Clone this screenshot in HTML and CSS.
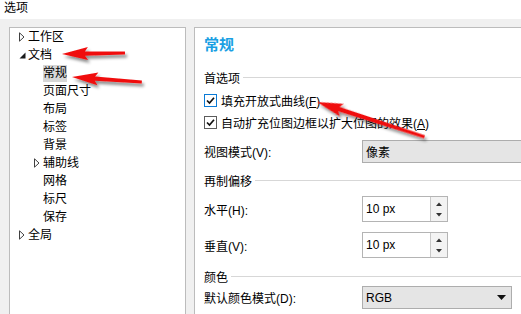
FILE: index.html
```html
<!DOCTYPE html>
<html lang="zh-CN">
<head>
<meta charset="utf-8">
<title>选项</title>
<link rel="stylesheet" href="styles.css">
</head>
<body>
<div class="title">选项</div>
<div class="main">
  <div class="tree">
    <div class="node l0"><span class="tog"><svg width="6" height="10" viewBox="0 0 6 10"><path d="M0.5 0.8 L5 5 L0.5 9.2 Z" fill="#fff" stroke="#404040" stroke-width="1"/></svg></span><span class="lbl">工作区</span></div>
    <div class="node l0"><span class="tog"><svg width="7" height="7" viewBox="0 0 7 7"><path d="M6.5 0.5 L6.5 6.5 L0.5 6.5 Z" fill="#1a1a1a"/></svg></span><span class="lbl">文档</span></div>
    <div class="node l1"><span class="tog"></span><span class="lbl sel">常规</span></div>
    <div class="node l1"><span class="tog"></span><span class="lbl">页面尺寸</span></div>
    <div class="node l1"><span class="tog"></span><span class="lbl">布局</span></div>
    <div class="node l1"><span class="tog"></span><span class="lbl">标签</span></div>
    <div class="node l1"><span class="tog"></span><span class="lbl">背景</span></div>
    <div class="node l1"><span class="tog"><svg width="6" height="10" viewBox="0 0 6 10"><path d="M0.5 0.8 L5 5 L0.5 9.2 Z" fill="#fff" stroke="#404040" stroke-width="1"/></svg></span><span class="lbl">辅助线</span></div>
    <div class="node l1"><span class="tog"></span><span class="lbl">网格</span></div>
    <div class="node l1"><span class="tog"></span><span class="lbl">标尺</span></div>
    <div class="node l1"><span class="tog"></span><span class="lbl">保存</span></div>
    <div class="node l0"><span class="tog"><svg width="6" height="10" viewBox="0 0 6 10"><path d="M0.5 0.8 L5 5 L0.5 9.2 Z" fill="#fff" stroke="#404040" stroke-width="1"/></svg></span><span class="lbl">全局</span></div>
  </div>
  <div class="page">
    <div class="heading">常规</div>
    <div class="group g1">首选项</div>
    <div class="check c1"><span class="box focus"><svg width="11" height="11" viewBox="0 0 11 11"><path d="M2 5.5 L4.5 8 L9 2.8" fill="none" stroke="#111" stroke-width="1.7"/></svg></span><span>填充开放式曲线(<u>F</u>)</span></div>
    <div class="check c2"><span class="box"><svg width="11" height="11" viewBox="0 0 11 11"><path d="M2 5.5 L4.5 8 L9 2.8" fill="none" stroke="#111" stroke-width="1.7"/></svg></span><span>自动扩充位图边框以扩大位图的效果(<u>A</u>)</span></div>
    <div class="field f-view"><span class="flabel">视图模式(V):</span><span class="select wide">像素</span></div>
    <div class="group g2">再制偏移</div>
    <div class="field f-h"><span class="flabel">水平(H):</span><span class="spin"><span class="spin-val">10 px</span><span class="spin-btns"><svg width="6" height="4" viewBox="0 0 6 4"><path d="M0 4 L3 0.5 L6 4 Z" fill="#333"/></svg><svg width="6" height="4" viewBox="0 0 6 4"><path d="M0 0 L3 3.5 L6 0 Z" fill="#333"/></svg></span></span></div>
    <div class="field f-v"><span class="flabel">垂直(V):</span><span class="spin"><span class="spin-val">10 px</span><span class="spin-btns"><svg width="6" height="4" viewBox="0 0 6 4"><path d="M0 4 L3 0.5 L6 4 Z" fill="#333"/></svg><svg width="6" height="4" viewBox="0 0 6 4"><path d="M0 0 L3 3.5 L6 0 Z" fill="#333"/></svg></span></span></div>
    <div class="group g3">颜色</div>
    <div class="field f-color"><span class="flabel">默认颜色模式(D):</span><span class="select combo"><span>RGB</span><svg width="9" height="5" viewBox="0 0 9 5"><path d="M0 0 L9 0 L4.5 5 Z" fill="#111"/></svg></span></div>
  </div>
</div>
<svg class="arrows" width="521" height="314" viewBox="0 0 521 314">
  <defs>
    <filter id="sh" x="-30%" y="-60%" width="160%" height="220%">
      <feDropShadow dx="2" dy="3" stdDeviation="1.8" flood-color="#000" flood-opacity="0.45"/>
    </filter>
  </defs>
  <g filter="url(#sh)" fill="#f01010">
    <polygon transform="translate(62 54) rotate(-0.9)" points="0,0 26,-6.5 23,-2.2 63,-1.4 63,1.4 23,2.2 26,6.5"/>
    <polygon transform="translate(72 77) rotate(4.1)" points="0,0 26,-6.5 23,-2.2 70,-1.4 70,1.4 23,2.2 26,6.5"/>
    <polygon transform="translate(317 102) rotate(17.95)" points="0,0 26,-6.5 23,-2.2 113,-1.5 113,1.5 23,2.2 26,6.5"/>
  </g>
</svg>
</body>
</html>
```
FILE: styles.css
```css
html, body {
  margin: 0;
  width: 521px;
  height: 314px;
  overflow: hidden;
}
body {
  position: relative;
  background: #f0f0f0;
  font-family: "Liberation Sans", "Noto Sans CJK SC", sans-serif;
  font-size: 12px;
  color: #000;
}
.title {
  height: 19px;
  line-height: 17px;
  padding-left: 4px;
  background: #fff;
}
.main {
  display: flex;
  gap: 8px;
  padding: 8px 0 0 9px;
}
.tree {
  flex: none;
  width: 177px;
  height: 300px;
  box-sizing: border-box;
  background: #fff;
  border: 1px solid #bcbcbc;
}
.node {
  height: 18px;
  display: flex;
  align-items: center;
}
.l0 { padding-left: 9px; }
.l1 { padding-left: 24px; }
.tog {
  width: 9px;
  flex: none;
  display: flex;
  align-items: center;
}
.lbl {
  line-height: 17px;
  white-space: nowrap;
}
.sel {
  background: #d6d6d6;
}
.page {
  flex: none;
  width: 340px;
  height: 300px;
  box-sizing: border-box;
  background: #fff;
  border: 1px solid #bcbcbc;
  padding-left: 9px;
  display: flex;
  flex-direction: column;
  overflow: hidden;
}
.heading {
  margin-top: 7px;
  height: 20px;
  line-height: 20px;
  font-size: 15px;
  font-weight: bold;
  color: #1a9fe3;
}
.group {
  height: 16px;
  display: flex;
  align-items: center;
  white-space: nowrap;
}
.group::after {
  content: "";
  flex: 1;
  border-top: 1px solid #d7d7d7;
  margin-left: 3px;
}
.g1 { margin-top: 14px; }
.g2 { margin-top: 9px; }
.g3 { margin-top: 10px; }
.check {
  height: 18px;
  display: flex;
  align-items: center;
  white-space: nowrap;
}
.c1 { margin-top: 6px; }
.c2 { margin-top: 4px; }
.box {
  width: 13px;
  height: 13px;
  box-sizing: border-box;
  border: 1px solid #5c5c5c;
  background: #fff;
  margin-right: 4px;
  display: flex;
  align-items: center;
  justify-content: center;
  flex: none;
}
.box.focus {
  border-color: #0a7ad6;
}
.field {
  display: flex;
  align-items: center;
  white-space: nowrap;
}
.flabel {
  width: 158px;
  flex: none;
}
.f-view { margin-top: 9px; height: 23px; }
.f-h { margin-top: 8px; height: 26px; }
.f-v { margin-top: 10px; height: 26px; }
.f-color { margin-top: 2px; height: 23px; }
.select {
  height: 23px;
  box-sizing: border-box;
  background: #e5e5e5;
  border: 1px solid #adadad;
  padding-left: 3px;
  display: flex;
  align-items: center;
}
.wide {
  width: 200px;
  flex: none;
}
.combo {
  width: 150px;
  flex: none;
  justify-content: space-between;
  padding-right: 5px;
}
.spin {
  width: 86px;
  height: 26px;
  box-sizing: border-box;
  border: 1px solid #b4b4b4;
  display: flex;
  flex: none;
}
.spin-val {
  flex: 1;
  padding-left: 3px;
  display: flex;
  align-items: center;
}
.spin-btns {
  width: 17px;
  border-left: 1px solid #c8c8c8;
  background: #f3f3f3;
  display: flex;
  flex-direction: column;
  align-items: center;
  justify-content: space-between;
  padding: 5px 0 4px;
  box-sizing: border-box;
}
.arrows {
  position: absolute;
  left: 0;
  top: 0;
  pointer-events: none;
}
```
